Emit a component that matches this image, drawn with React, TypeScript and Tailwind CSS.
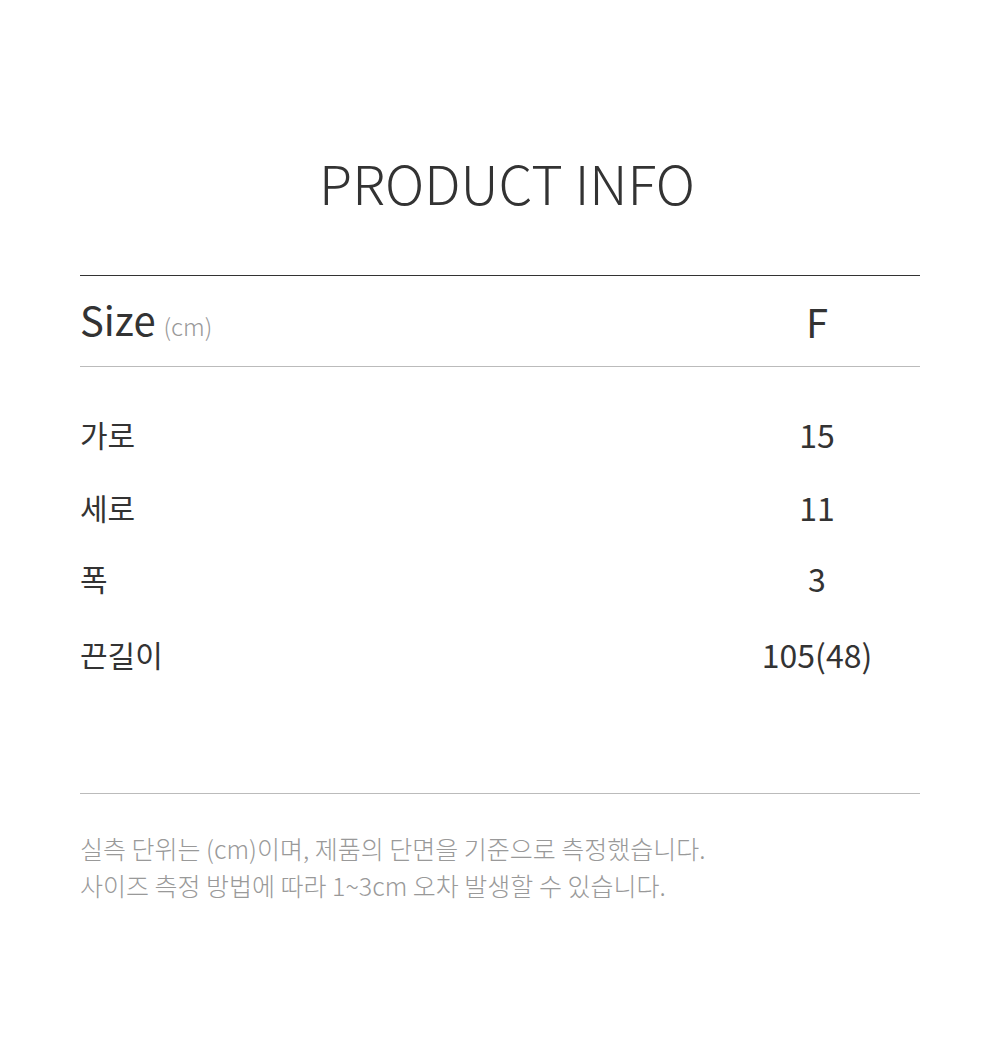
import React from 'react';

const rows = [
    { label: '가로', value: '15', h: 'h-[74px]' },
    { label: '세로', value: '11', h: 'h-[72px]' },
    { label: '폭', value: '3', h: 'h-[70px]' },
    { label: '끈길이', value: '105(48)', h: 'h-[82px]' },
];

const App: React.FC = () => {
    return (
        <div
            className="w-[1000px] h-[1059px] bg-white text-[#333]"
            style={{ fontFamily: '"Noto Sans CJK KR", "Noto Sans", sans-serif' }}
        >
            <div className="pt-[149px] px-[80px]">
                {/* Title */}
                <h1 className="pl-[14px] text-center text-[54px] font-light leading-[66px] text-[#333]">
                    PRODUCT INFO
                </h1>

                {/* Table */}
                <div className="mt-[60px] border-t border-[#333]">
                    <div className="flex items-center h-[91px] border-b border-[#bbb]">
                        <div className="flex-1 flex items-baseline">
                            <span className="text-[40px] leading-none">Size</span>
                            <span className="ml-[8px] text-[24px] text-[#999] font-light">(cm)</span>
                        </div>
                        <div className="w-[206px] text-center text-[40px] leading-none">F</div>
                    </div>

                    <div className="pt-[30px] pb-[98px] border-b border-[#bbb]">
                        {rows.map((row) => (
                            <div key={row.label} className={`flex items-center ${row.h}`}>
                                <div className="flex-1 text-[30px]">{row.label}</div>
                                <div className="w-[206px] text-center text-[32px]">{row.value}</div>
                            </div>
                        ))}
                    </div>
                </div>

                {/* Note */}
                <div className="mt-[36px] text-[25px] leading-[37px] text-[#999] font-light">
                    <p>실측 단위는 (cm)이며, 제품의 단면을 기준으로 측정했습니다.</p>
                    <p>사이즈 측정 방법에 따라 1~3cm 오차 발생할 수 있습니다.</p>
                </div>
            </div>
        </div>
    );
};

export default App;
